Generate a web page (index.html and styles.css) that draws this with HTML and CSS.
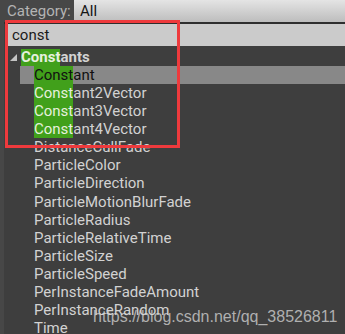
FILE: index.html
```html
<!doctype html>
<html lang="en">
  <head>
    <meta charset="utf-8">
    <title>Palette</title>
    <link rel="stylesheet" href="styles.css">
  </head>
  <body>
    <div id="palette">
      <div class="topbar">
        <span class="label">Category:</span>
        <div class="dropdown">All</div>
      </div>
      <div class="search">const</div>

      <div class="tree">
        <div class="row group">
          <svg class="arrow" width="7" height="7" viewBox="0 0 7 7"><polygon points="7,0 7,7 0,7" fill="#c4c4c4"/></svg>
          <span><span class="hit">Const</span>ants</span>
        </div>
        <div class="row item selected"><span><span class="hit">Const</span>ant</span></div>
        <div class="row item"><span><span class="hit">Const</span>ant2Vector</span></div>
        <div class="row item"><span><span class="hit">Const</span>ant3Vector</span></div>
        <div class="row item"><span><span class="hit">Const</span>ant4Vector</span></div>
        <div class="row item">DistanceCullFade</div>
        <div class="row item">ParticleColor</div>
        <div class="row item">ParticleDirection</div>
        <div class="row item">ParticleMotionBlurFade</div>
        <div class="row item">ParticleRadius</div>
        <div class="row item">ParticleRelativeTime</div>
        <div class="row item">ParticleSize</div>
        <div class="row item">ParticleSpeed</div>
        <div class="row item">PerInstanceFadeAmount</div>
        <div class="row item">PerInstanceRandom</div>
        <div class="row item">Time</div>
      </div>

      <!-- annotation + watermark sit on top of the screenshot -->
      <div class="mark"></div>
      <div class="watermark">https://blog.csdn.net/qq_38526811</div>
    </div>
  </body>
</html>
```
FILE: styles.css
```css
html, body {
  margin: 0;
  padding: 0;
}

body {
  background: #3e3e3e;
  font-family: Roboto, "Noto Sans", sans-serif;
  font-size: 15px;
}

#palette {
  position: relative;
  width: 345px;
  height: 334px;
  overflow: hidden;
  background: #3e3e3e;
  border-left: 4px solid #474747;
  box-sizing: border-box;
}

.topbar {
  display: flex;
  align-items: stretch;
  height: 22px;
  background: #474747;
  border-bottom: 2px solid #2e2e2e;
  margin-left: -4px;
}

.topbar .label {
  color: #b4b4b4;
  padding: 0 4px 0 7px;
  line-height: 22px;
  width: 63px;
}

.dropdown {
  flex: 1;
  background: linear-gradient(#e4e4e4, #bdbdbd);
  color: #151515;
  padding-left: 6px;
  line-height: 22px;
}

.search {
  height: 22px;
  line-height: 22px;
  margin-left: 1px;
  padding-left: 7px;
  background: #cbcbcb;
  color: #1a1a1a;
  font-size: 15px;
  border-bottom: 2px solid #3e3e3e;
}

.tree {
  display: flex;
  flex-direction: column;
}

.row {
  display: flex;
  align-items: center;
  height: 18.07px;
  color: #d2d2d2;
  white-space: nowrap;
}

.row .hit {
  display: inline-block;
  background: #41a01b;
  color: #e6f0de;
}

.group {
  padding-left: 6px;
  gap: 4px;
  font-weight: 700;
}

.group .hit {
  line-height: 17px;
  margin-top: 1px;
}

.arrow {
  margin-top: 1px;
}

.item {
  padding-left: 30px;
}

.item .hit {
  line-height: 18px;
}

.selected {
  margin-left: 16px;
  padding-left: 14px;
  background: #888888;
  color: #111;
}

.selected .hit {
  color: #111;
}

.mark {
  position: absolute;
  left: 1px;
  top: 20px;
  width: 169px;
  height: 122px;
  border: 3px solid #ee3a3d;
}

.watermark {
  position: absolute;
  left: 89px;
  top: 308px;
  font-family: "Liberation Sans", Arial, sans-serif;
  font-size: 16px;
  color: rgba(215, 215, 215, 0.75);
}
```
